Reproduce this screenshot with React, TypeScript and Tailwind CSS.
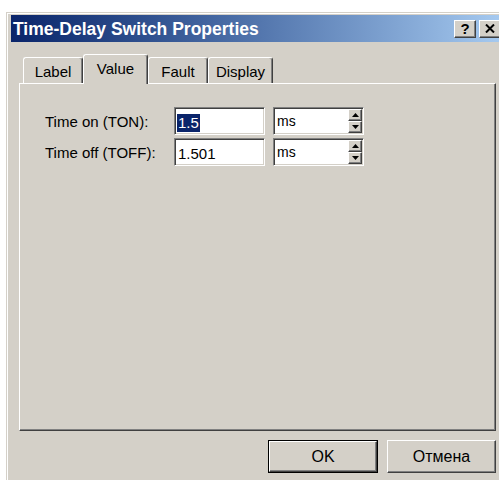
import { useState } from 'react';

// Classic 3D bevels: outer edge as border, inner edge as inset shadow
const raised =
  'border border-t-white border-l-white border-r-[#404040] border-b-[#404040] shadow-[inset_-1px_-1px_0_#808080]';
const sunken =
  'border border-t-[#808080] border-l-[#808080] border-r-white border-b-white shadow-[inset_1px_1px_0_#404040,inset_-1px_-1px_0_#d4d0c8]';

const TABS = [
  { id: 'label', text: 'Label', w: 'w-[60px]' },
  { id: 'value', text: 'Value', w: 'w-[65px]' },
  { id: 'fault', text: 'Fault', w: 'w-[60px]' },
  { id: 'display', text: 'Display', w: 'w-[65px]' },
];

function SpinButton({ up }: { up?: boolean }) {
  return (
    <div className={`flex h-[12px] w-[14px] items-center justify-center bg-[#d4d0c8] ${raised}`}>
      <svg width="7" height="4" viewBox="0 0 7 4">
        {up ? <path d="M3.5 0 L7 4 L0 4 Z" fill="#000" /> : <path d="M0 0 L7 0 L3.5 4 Z" fill="#000" />}
      </svg>
    </div>
  );
}

function UnitCombo({ unit }: { unit: string }) {
  return (
    <div className={`flex h-[28px] w-[91px] bg-white ${sunken}`}>
      <div className="flex-1 pl-[3px] pt-[5px] text-[14px] leading-[16px]">{unit}</div>
      <div className="flex flex-col pt-[1px] pr-[1px]">
        <SpinButton up />
        <SpinButton />
      </div>
    </div>
  );
}

function ValueRow({ label, value, selected }: { label: string; value: string; selected?: boolean }) {
  return (
    <div className="flex items-center">
      <div className="w-[129px] text-[15px] leading-[17px]">{label}</div>
      <div className={`h-[28px] w-[91px] bg-white pl-[2px] pt-[3px] ${sunken}`}>
        <span
          className={`inline-block px-[1px] text-[15px] leading-[18px] ${selected ? 'bg-[#0a246a] text-white' : ''}`}
        >
          {value}
        </span>
      </div>
      <div className="ml-[8px]">
        <UnitCombo unit="ms" />
      </div>
    </div>
  );
}

export default function App() {
  const [activeTab, setActiveTab] = useState('value');

  return (
    <div className="h-[480px] w-[499px] overflow-hidden bg-white font-['Liberation_Sans',Arial,sans-serif] text-black">
      <div className="ml-[6px] mt-[12px] h-[480px] w-[505px] border-l border-t border-[#d4d0c8] bg-[#d4d0c8]">
        <div className="h-full border-l border-t border-white pl-[3px] pt-[1px]">
          {/* Title bar */}
          <div className="flex h-[27px] w-[491px] items-center bg-gradient-to-r from-[#0a246a] to-[#a6caf0] pl-[2px] pr-[1px]">
            <span className="flex-1 text-[17.5px] font-bold leading-[20px] text-white">
              Time-Delay Switch Properties
            </span>
            <button
              className={`flex h-[18px] w-[22px] items-center justify-center bg-[#d4d0c8] text-[15px] font-bold leading-none ${raised}`}
            >
              ?
            </button>
            <button className={`ml-[3px] flex h-[18px] w-[22px] items-center justify-center bg-[#d4d0c8] ${raised}`}>
              <svg width="10" height="9" viewBox="0 0 10 9">
                <path d="M1 0.5 L9 8.5 M9 0.5 L1 8.5" stroke="#000" strokeWidth="2" />
              </svg>
            </button>
          </div>

          {/* Tabs */}
          <div className="ml-[12px] mt-[12px] flex h-[29px] items-end">
            {TABS.map((tab) => {
              const isActive = tab.id === activeTab;
              return (
                <button
                  key={tab.id}
                  onClick={() => setActiveTab(tab.id)}
                  className={`relative flex ${tab.w} justify-center rounded-t-[3px] border-l border-t border-r border-l-white border-t-white border-r-[#404040] bg-[#d4d0c8] pt-[5px] text-[15px] leading-[17px] shadow-[inset_-1px_0_0_#808080] ${
                    isActive ? 'z-10 -mb-[1px] h-[30px]' : 'h-[26px]'
                  }`}
                >
                  {tab.text}
                </button>
              );
            })}
          </div>

          {/* Tab page */}
          <div className="ml-[8px] h-[348px] w-[477px] border border-t-white border-l-white border-r-[#404040] border-b-[#404040] shadow-[inset_-1px_-1px_0_#808080]">
            <div className="flex flex-col gap-[3px] pl-[25px] pt-[23px]">
              <ValueRow label="Time on (TON):" value="1.5" selected />
              <ValueRow label="Time off (TOFF):" value="1.501" />
            </div>
          </div>

          {/* Dialog buttons */}
          <div className="mt-[9px] flex w-[485px] justify-end gap-[9px]">
            <button className="h-[33px] w-[110px] border border-black">
              <div className={`flex h-full w-full items-center justify-center text-[16px] leading-[18px] ${raised}`}>
                OK
              </div>
            </button>
            <button
              className={`flex h-[33px] w-[109px] items-center justify-center text-[16px] leading-[18px] ${raised}`}
            >
              Отмена
            </button>
          </div>
        </div>
      </div>
    </div>
  );
}
